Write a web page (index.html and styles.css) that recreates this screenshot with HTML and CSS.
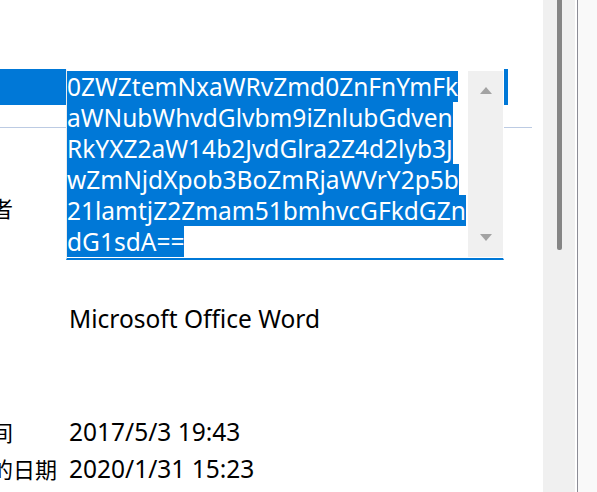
FILE: index.html
```html
<!DOCTYPE html>
<html lang="zh-CN">
<head>
<meta charset="utf-8">
<title>属性 - 详细信息</title>
<link rel="stylesheet" href="styles.css">
</head>
<body>
<div class="window">
  <div class="pane">
    <div class="list">
      <div class="row selected">
        <span class="label">作者</span>
        <span class="value"></span>
      </div>
      <div class="sep"></div>
      <div class="rows">
        <div class="row"><span class="label">最后一次保存者</span><span class="value"></span></div>
        <div class="row"><span class="label">修订号</span><span class="value"></span></div>
        <div class="row"><span class="label">版本号</span><span class="value"></span></div>
        <div class="row"><span class="label">程序名称</span><span class="value">Microsoft Office Word</span></div>
        <div class="row"><span class="label">公司</span><span class="value"></span></div>
        <div class="row"><span class="label">管理者</span><span class="value"></span></div>
        <div class="row"><span class="label">创建内容的时间</span><span class="value">2017/5/3 19:43</span></div>
        <div class="row"><span class="label">最后一次保存的日期</span><span class="value">2020/1/31 15:23</span></div>
      </div>
    </div>
    <div class="editor">
      <div class="editor-text">
        <div class="line"><span class="sel">0ZWZtemNxaWRvZmd0ZnFnYmFk</span></div>
        <div class="line"><span class="sel">aWNubWhvdGlvbm9iZnlubGdven</span></div>
        <div class="line"><span class="sel">RkYXZ2aW14b2JvdGlra2Z4d2lyb3J</span></div>
        <div class="line"><span class="sel">wZmNjdXpob3BoZmRjaWVrY2p5b</span></div>
        <div class="line"><span class="sel">21lamtjZ2Zmam51bmhvcGFkdGZn</span></div>
        <div class="line"><span class="sel">dG1sdA==</span></div>
      </div>
      <div class="editor-scroll">
        <span class="arrow up"></span>
        <span class="arrow down"></span>
      </div>
    </div>
  </div>
  <div class="vscroll"><div class="thumb"></div></div>
  <div class="gap"></div>
  <div class="divider"></div>
  <div class="edge"></div>
</div>
</body>
</html>
```
FILE: styles.css
```css
html, body {
  margin: 0;
  padding: 0;
  background: #ffffff;
}
body {
  font-family: "Noto Sans", "Noto Sans CJK SC", sans-serif;
  font-size: 24.5px;
  color: #000000;
  overflow: hidden;
}
.window {
  display: flex;
  width: 597px;
  height: 492px;
  overflow: hidden;
}
.pane {
  position: relative;
  width: 543px;
  flex: none;
  overflow: hidden;
}
.list {
  padding-top: 69px;
}
.row {
  display: grid;
  grid-template-columns: 210px 1fr;
  align-items: center;
  margin-left: -141px;
  height: 37.4px;
  white-space: nowrap;
}
.label {
  font-family: "Noto Sans CJK SC", sans-serif;
  font-size: 22px;
}
.value {
  font-family: "Noto Sans", "Noto Sans CJK SC", sans-serif;
  font-size: 24.5px;
}
.row.selected {
  height: 36px;
  width: 649px;
  background: #0078d7;
}
.sep {
  margin-top: 22px;
  width: 532px;
  height: 1px;
  background: #bccbe3;
}
.rows {
  margin-top: 60px;
}
.editor {
  position: absolute;
  left: 66px;
  top: 69px;
  width: 436px;
  display: flex;
  border: 1px solid #ffffff;
  border-left-color: #ececec;
  border-bottom: 2px solid #0078d7;
  padding: 1px 0;
  background: #ffffff;
}
.editor-text {
  flex: 1;
  min-width: 0;
  font-size: 24.5px;
}
.line {
  height: 31px;
  line-height: 31px;
  white-space: nowrap;
}
.sel {
  display: inline-block;
  height: 31px;
  background: #0078d7;
  color: #ffffff;
}
.editor-scroll {
  flex: none;
  width: 35px;
  background: #f0f0f0;
  display: flex;
  flex-direction: column;
  justify-content: space-between;
  align-items: center;
  padding: 16px 0;
}
.arrow {
  width: 0;
  height: 0;
  border-left: 6px solid transparent;
  border-right: 6px solid transparent;
}
.arrow.up {
  border-bottom: 7px solid #a3a3a3;
}
.arrow.down {
  border-top: 7px solid #a3a3a3;
}
.vscroll {
  flex: none;
  width: 32px;
  background: #f0f0f0;
  padding-left: 14px;
  box-sizing: border-box;
}
.thumb {
  width: 5px;
  height: 250px;
  background: #858585;
  border-radius: 0 0 2px 2px;
}
.gap {
  flex: none;
  width: 2px;
  background: #ffffff;
}
.divider {
  flex: none;
  width: 1px;
  background: #8c8c96;
}
.edge {
  flex: 1;
  background: #f9f9f9;
}
```
